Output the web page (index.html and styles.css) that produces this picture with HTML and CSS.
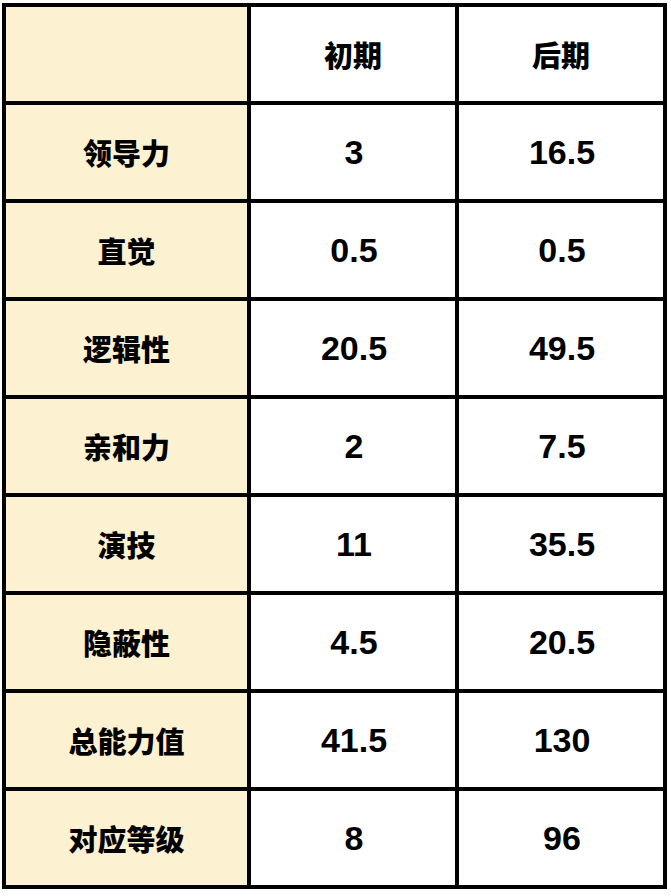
FILE: index.html
```html
<!DOCTYPE html>
<html lang="zh">
<head>
<meta charset="utf-8">
<link rel="stylesheet" href="styles.css">
</head>
<body>
<div class="table">
  <div class="cell label"></div><div class="cell head">初期</div><div class="cell head">后期</div>
  <div class="cell label">领导力</div><div class="cell num">3</div><div class="cell num">16.5</div>
  <div class="cell label">直觉</div><div class="cell num">0.5</div><div class="cell num">0.5</div>
  <div class="cell label">逻辑性</div><div class="cell num">20.5</div><div class="cell num">49.5</div>
  <div class="cell label">亲和力</div><div class="cell num">2</div><div class="cell num">7.5</div>
  <div class="cell label">演技</div><div class="cell num">11</div><div class="cell num">35.5</div>
  <div class="cell label">隐蔽性</div><div class="cell num">4.5</div><div class="cell num">20.5</div>
  <div class="cell label">总能力值</div><div class="cell num">41.5</div><div class="cell num">130</div>
  <div class="cell label">对应等级</div><div class="cell num">8</div><div class="cell num">96</div>
</div>
</body>
</html>
```
FILE: styles.css
```css
html, body {
  margin: 0;
  padding: 0;
  background: #ffffff;
}
.table {
  margin: 3px 0 0 2px;
  display: grid;
  grid-template-columns: 241px 204px 204px;
  grid-auto-rows: 94px;
  gap: 4px;
  padding: 4px;
  width: max-content;
  background: #000000;
}
.cell {
  display: flex;
  align-items: center;
  justify-content: center;
  background: #ffffff;
  color: #000000;
  font-weight: 700;
}
.label, .head {
  font-family: "Noto Sans CJK SC", "Noto Sans", sans-serif;
  font-size: 29px;
  font-weight: 900;
}
.label {
  background: #fcf1d0;
}
.num {
  font-family: "Liberation Sans", Arial, sans-serif;
  font-size: 34px;
  padding-left: 2px;
}
```
